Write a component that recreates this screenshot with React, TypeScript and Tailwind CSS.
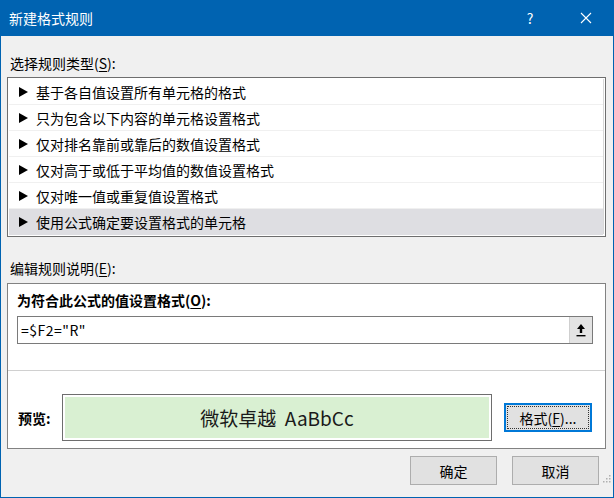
import React from "react";

const FONT = { fontFamily: '"Noto Sans CJK SC", "Microsoft YaHei", "Liberation Sans", sans-serif' };

const rules = [
    "基于各自值设置所有单元格的格式",
    "只为包含以下内容的单元格设置格式",
    "仅对排名靠前或靠后的数值设置格式",
    "仅对高于或低于平均值的数值设置格式",
    "仅对唯一值或重复值设置格式",
    "使用公式确定要设置格式的单元格",
];

function Triangle() {
    return (
        <svg width="9" height="10" viewBox="0 0 9 10" className="shrink-0">
            <polygon points="0,0 9,5 0,10" fill="#000" />
        </svg>
    );
}

export default function App() {
    const selected = 5;
    return (
        <div
            style={FONT}
            className="w-[614px] h-[498px] bg-[#f0f0f0] border-x border-b border-[#0063b1] flex flex-col text-[14px] text-black leading-[20px] overflow-hidden"
        >
            {/* title bar */}
            <div className="h-[36px] bg-[#0063b1] flex items-center text-white shrink-0 -mx-px">
                <span className="pl-[9px] flex-1">新建格式规则</span>
                <span className="w-[20px] text-center mr-[40px] text-[14px]">?</span>
                <svg width="12" height="12" viewBox="0 0 12 12" className="mr-[22px]">
                    <path d="M1 1 L11 11 M11 1 L1 11" stroke="#fff" strokeWidth="1.1" />
                </svg>
            </div>

            <div className="pl-[6px] pr-[6px] flex flex-col">
                <div className="mt-[17px] h-[20px] pl-[3px]">
                    选择规则类型(<span className="underline underline-offset-2">S</span>):
                </div>

                <div className="mt-[4px] h-[160px] w-[599px] border border-[#6e6e6e] bg-white p-px pb-[2px]">
                    <div className="border border-[#d8d8d8] border-t-0 border-l-0 h-full">
                        {rules.map((r, i) => (
                            <div
                                key={r}
                                className={`h-[26px] flex items-center gap-[8px] pl-[10px] ${
                                    i === selected ? "bg-[#dedee2]" : "border-b border-[#f0f0f0]"
                                }`}
                            >
                                <Triangle />
                                <span>{r}</span>
                            </div>
                        ))}
                    </div>
                </div>

                <div className="mt-[21px] h-[20px] pl-[3px]">
                    编辑规则说明(<span className="underline underline-offset-2">E</span>):
                </div>

                <div className="mt-[5px] h-[166px] w-[599px] border border-[#828282] bg-white flex flex-col">
                    <div className="mt-[6px] h-[20px] pl-[9px] font-bold">
                        为符合此公式的值设置格式(<span className="underline underline-offset-2">O</span>):
                    </div>
                    <div className="mt-[6px] ml-[9px] w-[576px] h-[28px] border border-[#7a7a7a] flex items-center">
                        <span className="pl-[3px] flex-1 tracking-[0.5px]">=$F2="R"</span>
                        <div className="w-[23px] h-[26px] bg-[#e3e3e3] border-l border-[#cfcfcf] flex items-center justify-center">
                            <svg width="10" height="14" viewBox="0 0 10 14">
                                <polygon points="5,1 9,6 6.2,6 6.2,10 3.8,10 3.8,6 1,6" fill="#000" />
                                <rect x="0.5" y="12" width="9" height="1.4" fill="#000" />
                            </svg>
                        </div>
                    </div>
                    <div className="mt-[26px] h-px bg-[#d0d0d0]" />
                    <div className="mt-[23px] flex items-center">
                        <span className="pl-[10px] w-[54px] font-bold">预览:</span>
                        <div className="w-[430px] h-[47px] border border-[#6e6e6e] p-[2px]">
                            <div className="h-full bg-[#d9f0d2] flex items-center justify-center text-[19px] text-[#1a1a1a] leading-none">
                                微软卓越&nbsp;&nbsp;AaBbCc
                            </div>
                        </div>
                        <button className="ml-[12px] w-[88px] h-[29px] bg-[#e1e1e1] border-2 border-[#0078d7] flex items-center justify-center p-px">
                            <span className="w-full h-full border border-dotted border-[#333] flex items-center justify-center text-[14px]">
                                格式(<span className="underline underline-offset-2">F</span>)...
                            </span>
                        </button>
                    </div>
                </div>

                <div className="mt-[7px] flex justify-end gap-[15px] pr-[8px]">
                    <button className="w-[87px] h-[29px] bg-[#e1e1e1] border border-[#adadad] flex items-center justify-center">
                        确定
                    </button>
                    <button className="w-[87px] h-[29px] bg-[#e1e1e1] border border-[#adadad] flex items-center justify-center">
                        取消
                    </button>
                </div>
            </div>
            <div className="flex justify-end pr-[2px] -mt-[10px]">
                <svg width="8" height="8" viewBox="0 0 8 8">
                    <rect x="6" y="0" width="1.5" height="1.5" fill="#b0b0b0" />
                    <rect x="3" y="3" width="1.5" height="1.5" fill="#b0b0b0" />
                    <rect x="6" y="3" width="1.5" height="1.5" fill="#b0b0b0" />
                    <rect x="0" y="6" width="1.5" height="1.5" fill="#b0b0b0" />
                    <rect x="3" y="6" width="1.5" height="1.5" fill="#b0b0b0" />
                    <rect x="6" y="6" width="1.5" height="1.5" fill="#b0b0b0" />
                </svg>
            </div>
        </div>
    );
}
